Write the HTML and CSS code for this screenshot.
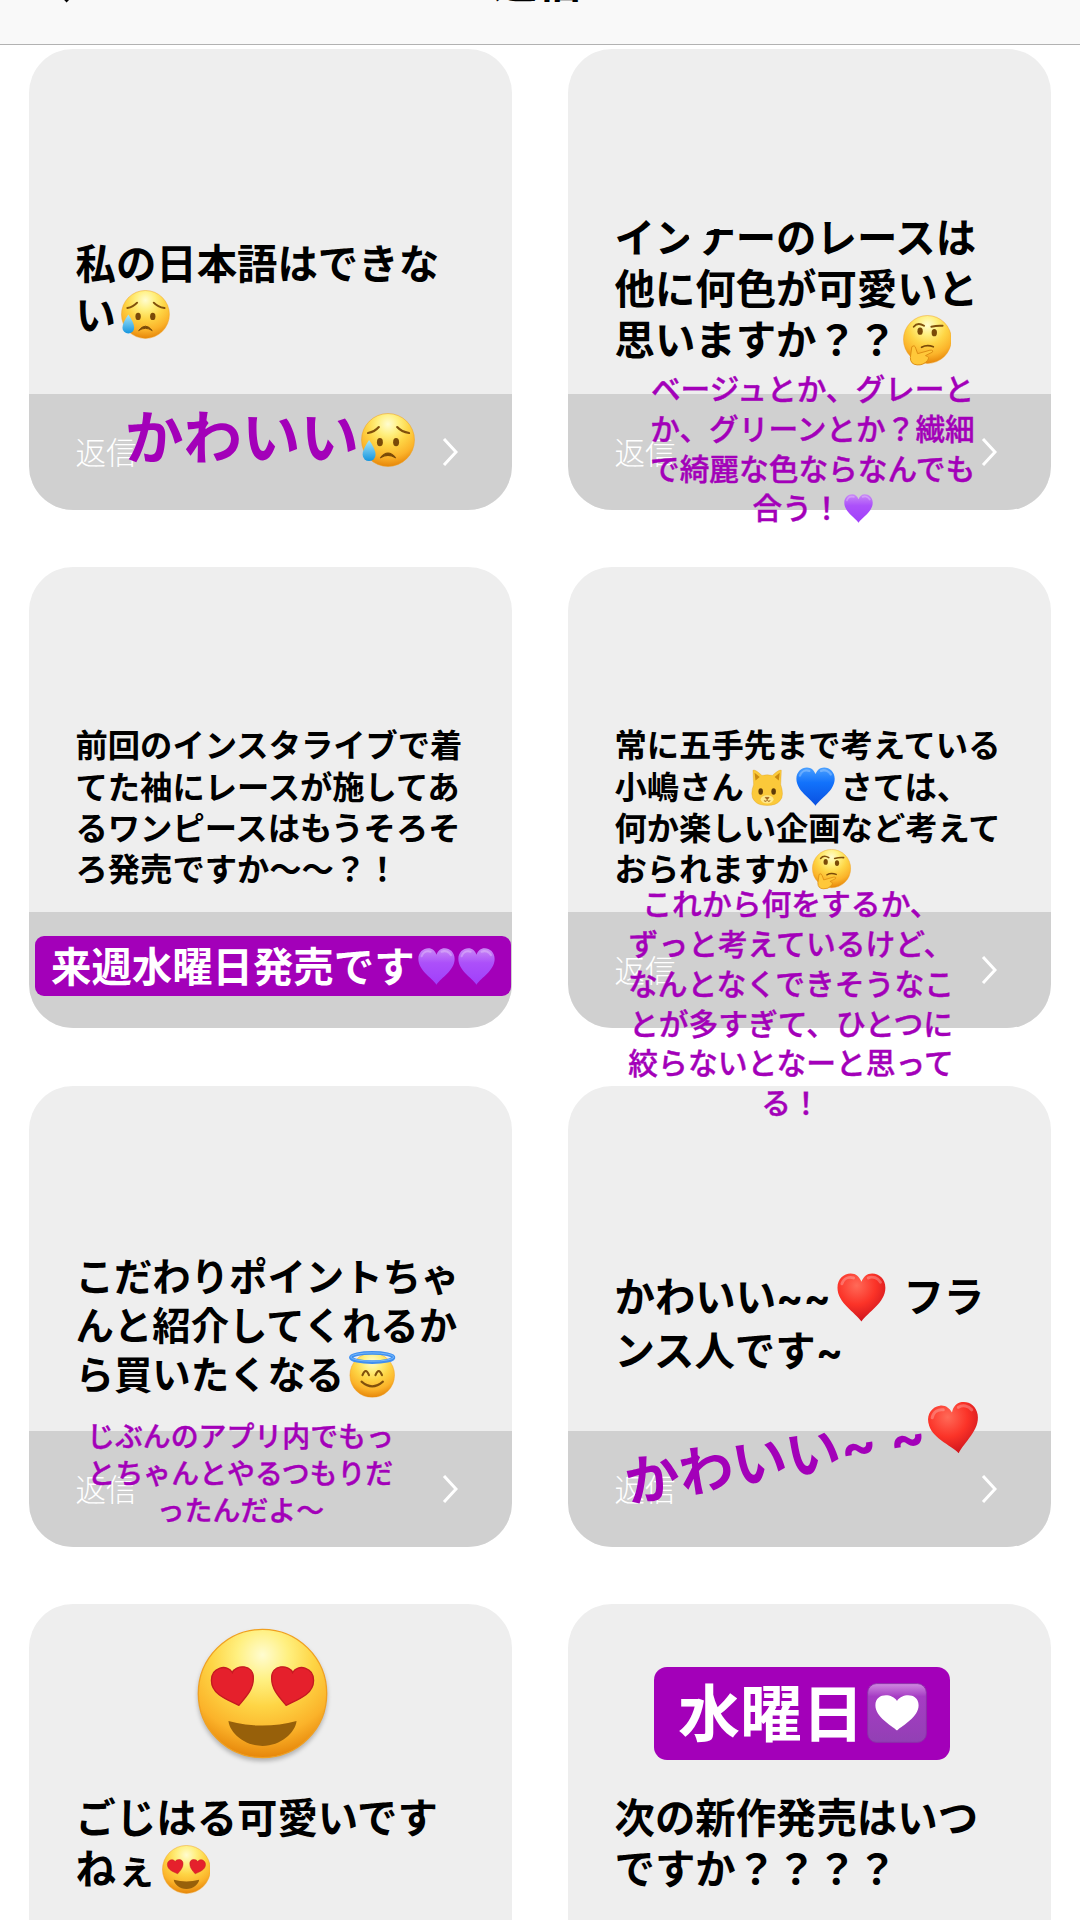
FILE: index.html
```html
<!DOCTYPE html>
<html lang="ja">
<head>
    <meta charset="UTF-8">
    <meta name="viewport" content="width=device-width, initial-scale=1.0">
    <title>返信</title>
    <link rel="stylesheet" href="styles.css">
</head>
<body>
    <!-- Emoji symbols -->
    <svg class="defs" width="0" height="0">
        <defs>
            <radialGradient id="face" cx="50%" cy="20%" r="80%">
                <stop offset="0" stop-color="#fffcd0"/>
                <stop offset="0.25" stop-color="#fff080"/>
                <stop offset="0.5" stop-color="#fed545"/>
                <stop offset="0.78" stop-color="#fbb32a"/>
                <stop offset="1" stop-color="#e6860a"/>
            </radialGradient>
            <linearGradient id="tear" x1="0" y1="0" x2="0" y2="1">
                <stop offset="0" stop-color="#a8e8fb"/>
                <stop offset="1" stop-color="#1595de"/>
            </linearGradient>
            <radialGradient id="red" cx="40%" cy="25%" r="80%">
                <stop offset="0" stop-color="#ff6a58"/>
                <stop offset="0.5" stop-color="#fb3328"/>
                <stop offset="1" stop-color="#c8101c"/>
            </radialGradient>
            <linearGradient id="blue" x1="0" y1="0" x2="0" y2="1">
                <stop offset="0" stop-color="#4aa0ff"/>
                <stop offset="0.4" stop-color="#1272fb"/>
                <stop offset="1" stop-color="#0a50e0"/>
            </linearGradient>
            <linearGradient id="purple" x1="0" y1="0" x2="0" y2="1">
                <stop offset="0" stop-color="#c98af5"/>
                <stop offset="0.4" stop-color="#ac50fa"/>
                <stop offset="1" stop-color="#a03ffa"/>
            </linearGradient>
            <linearGradient id="box" x1="0" y1="0" x2="0" y2="1">
                <stop offset="0" stop-color="#cf8ae0"/>
                <stop offset="0.22" stop-color="#a63cc4"/>
                <stop offset="1" stop-color="#9240b4"/>
            </linearGradient>
        </defs>

        <symbol id="sad" viewBox="0 0 100 100">
            <circle cx="50" cy="50" r="49" fill="url(#face)" stroke="#f0a020"/>
            <path d="M13 37Q25 35 33 26M67 26Q75 35 89 37" fill="none" stroke="#80500c" stroke-width="4" stroke-linecap="round"/>
            <ellipse cx="35" cy="54" rx="5.5" ry="7.5" fill="#7a4a08"/>
            <ellipse cx="65" cy="54" rx="5.5" ry="7.5" fill="#7a4a08"/>
            <path d="M36 83Q50 65 64 83Q50 74 36 83Z" fill="#7a4a08" stroke="#7a4a08" stroke-width="2" stroke-linejoin="round"/>
            <path d="M15 50Q27 67 27 77A12 12 0 0 1 3 77Q3 67 15 50Z" fill="url(#tear)"/>
        </symbol>

        <symbol id="think" viewBox="0 0 100 104">
            <circle cx="50" cy="50" r="49" fill="url(#face)" stroke="#f0a020"/>
            <path d="M22 24Q30 14 43 22M58 24Q70 21 81 22" fill="none" stroke="#80500c" stroke-width="4" stroke-linecap="round"/>
            <ellipse cx="35" cy="33" rx="5.5" ry="7.5" fill="#7a4a08"/>
            <ellipse cx="64" cy="36" rx="5.5" ry="7.5" fill="#7a4a08"/>
            <path d="M38 66Q49 60 62 65" fill="none" stroke="#7a4a08" stroke-width="3.5" stroke-linecap="round"/>
            <path d="M18 65Q24 60 26 68L30 79L55 72Q63 71 60 76L46 83Q56 86 50 93Q42 103 29 102Q15 101 15 87Z" fill="#ffc83a" stroke="#dc8d12" stroke-width="2"/>
        </symbol>

        <symbol id="halo" viewBox="0 0 100 100">
            <circle cx="50" cy="52" r="48" fill="url(#face)" stroke="#f0a020"/>
            <ellipse cx="50" cy="14" rx="46" ry="10" fill="none" stroke="#3f8ff0" stroke-width="8"/>
            <ellipse cx="50" cy="13" rx="46" ry="9" fill="none" stroke="#7cbcfa" stroke-width="2"/>
            <path d="M29 52Q36 34 43 52M57 52Q64 34 71 52" fill="none" stroke="#80500c" stroke-width="4.5" stroke-linecap="round"/>
            <path d="M27 66Q50 86 73 66" fill="none" stroke="#80500c" stroke-width="4.5" stroke-linecap="round"/>
        </symbol>

        <symbol id="love" viewBox="0 0 100 100">
            <circle cx="50" cy="50" r="49" fill="url(#face)" stroke="#f0a020"/>
            <path d="M32 59C24 55 11 51 11 40C11 30 23 27 27 34C29 28 44 27 43 39C43 47 37 53 32 59Z" fill="#e5202c" stroke="#c41a20"/>
            <path d="M68 59C76 55 89 51 89 40C89 30 77 27 73 34C71 28 56 27 57 39C57 47 63 53 68 59Z" fill="#e5202c" stroke="#c41a20"/>
            <path d="M24 71Q50 78 76 71C75 80 64 90 50 90S25 80 24 71Z" fill="#97600a"/>
        </symbol>

        <symbol id="cat" viewBox="0 0 100 116">
            <path d="M6 4Q12 0 34 20Q50 16 66 20Q88 0 94 4L92 48Q104 82 90 98Q78 113 50 113T10 98Q-4 82 8 48Z" fill="#fbc93a" stroke="#d99a20"/>
            <path d="M11 12L27 25L14 36ZM89 12L73 25L86 36Z" fill="#c98a10"/>
            <ellipse cx="30" cy="70" rx="7" ry="10" fill="#5e3a08"/>
            <ellipse cx="70" cy="70" rx="7" ry="10" fill="#5e3a08"/>
            <ellipse cx="50" cy="94" rx="20" ry="13" fill="#ffe88a"/>
            <path d="M44 88H56L50 95ZM40 98Q46 103 50 97Q54 103 60 98" fill="#b06a20" stroke="#8a5010" stroke-width="2"/>
        </symbol>

        <symbol id="heart" viewBox="0 0 100 100">
            <path d="M50 99C37 80 1 61 1 30C1 12 14 1 28 1C39 1 46 8 50 18C54 8 61 1 72 1C86 1 99 12 99 30C99 61 63 80 50 99Z"/>
            <path d="M10 22C14 11 24 7 34 10M64 10C73 6 84 10 89 19" fill="none" stroke="#fff" stroke-opacity="0.25" stroke-width="6" stroke-linecap="round"/>
        </symbol>

        <symbol id="heartbox" viewBox="0 0 100 100">
            <rect x="1" y="1" width="98" height="98" rx="15" fill="url(#box)" stroke="#8a30a8" stroke-width="1.5"/>
            <path d="M50 79C40 70 14 57 14 37C14 17 41 16 50 30C59 16 86 17 86 37C86 57 60 70 50 79Z" fill="#fff"/>
        </symbol>
    </svg>

    <header class="navbar">
        <svg class="back" width="24" height="42" viewBox="0 0 24 42"><path d="M22 2L3 21L22 40"/></svg>
        <h1>返信</h1>
    </header>

    <main class="grid">
        <article class="card">
            <div class="question">
                <p>私の日本語はできな<br>い<svg class="emoji"><use href="#sad"/></svg></p>
            </div>
            <div class="footer"><span>返信</span><svg class="chevron" viewBox="0 0 16 28"><path d="M2 1L14 14L2 27"/></svg></div>
            <div class="answer answer-cute">かわいい<svg class="emoji"><use href="#sad"/></svg></div>
        </article>

        <article class="card">
            <div class="question">
                <p>イン<span class="worn">ナ</span>ーのレースは<br>他に何色が可愛いと<br>思いますか？？<svg class="emoji think"><use href="#think"/></svg></p>
            </div>
            <div class="footer"><span>返信</span><svg class="chevron" viewBox="0 0 16 28"><path d="M2 1L14 14L2 27"/></svg></div>
            <div class="answer answer-colors">ベージュとか、グレーと<br>か、グリーンとか？繊細<br>で綺麗な色ならなんでも<br>合う！<svg class="emoji heart purple"><use href="#heart"/></svg></div>
        </article>

        <article class="card">
            <div class="question small">
                <p>前回のインスタライブで着<br>てた袖にレースが施してあ<br>るワンピースはもうそろそ<br>ろ発売ですか〜〜？！</p>
            </div>
            <div class="footer"></div>
            <div class="banner banner-week"><span>来週水曜日発売です</span><svg class="emoji heart purple"><use href="#heart"/></svg><svg class="emoji heart purple"><use href="#heart"/></svg></div>
        </article>

        <article class="card">
            <div class="question small">
                <p>常に五手先まで考えている<br>小嶋さん<svg class="emoji cat"><use href="#cat"/></svg><svg class="emoji heart blue"><use href="#heart"/></svg>さては、<br>何か楽しい企画など考えて<br>おられますか<svg class="emoji think"><use href="#think"/></svg></p>
            </div>
            <div class="footer"><span>返信</span><svg class="chevron" viewBox="0 0 16 28"><path d="M2 1L14 14L2 27"/></svg></div>
            <div class="answer answer-plans">これから何をするか、<br>ずっと考えているけど、<br>なんとなくできそうなこ<br>とが多すぎて、ひとつに<br>絞らないとなーと思って<br>る！</div>
        </article>

        <article class="card">
            <div class="question medium">
                <p>こだわりポイントちゃ<br>んと紹介してくれるか<br>ら買いたくなる<svg class="emoji"><use href="#halo"/></svg></p>
            </div>
            <div class="footer"><span>返信</span><svg class="chevron" viewBox="0 0 16 28"><path d="M2 1L14 14L2 27"/></svg></div>
            <div class="answer answer-app">じぶんのアプリ内でもっ<br>とちゃんとやるつもりだ<br>ったんだよ〜</div>
        </article>

        <article class="card">
            <div class="question">
                <p>かわいい<span class="tilde">~~</span><svg class="emoji heart red"><use href="#heart"/></svg> フラ<br>ンス人です<span class="tilde">~</span></p>
            </div>
            <div class="footer"><span>返信</span><svg class="chevron" viewBox="0 0 16 28"><path d="M2 1L14 14L2 27"/></svg></div>
            <div class="answer answer-tilted">かわいい<span class="tilde">~ ~</span><svg class="emoji heart red"><use href="#heart"/></svg></div>
        </article>

        <article class="card">
            <div class="question">
                <p>ごじはる可愛いです<br>ねぇ<svg class="emoji"><use href="#love"/></svg></p>
            </div>
            <div class="footer"></div>
            <svg class="sticker"><use href="#love"/></svg>
        </article>

        <article class="card">
            <div class="question">
                <p>次の新作発売はいつ<br>ですか？？？？</p>
            </div>
            <div class="footer"></div>
            <div class="banner banner-day"><span>水曜日</span><svg class="emoji"><use href="#heartbox"/></svg></div>
        </article>
    </main>
</body>
</html>
```

FILE: styles.css
```css
* {
    margin: 0;
    padding: 0;
    box-sizing: border-box;
}

html {
    overflow: hidden;
}

body {
    width: 1080px;
    height: 1920px;
    overflow: hidden;
    background: #fff;
    color: #000;
    font-family: "Noto Sans CJK JP", sans-serif;
}

.defs {
    position: absolute;
}

.navbar {
    position: relative;
    display: flex;
    justify-content: center;
    align-items: flex-end;
    height: 45px;
    padding: 0 5px 38px 0;
    overflow: hidden;
    background: #f9f9f9;
    border-bottom: 1px solid #b2b2b2;
}

.navbar h1 {
    font-size: 44px;
    font-weight: 700;
    line-height: 54px;
}

.back {
    position: absolute;
    left: 46px;
    top: -39px;
    fill: none;
    stroke: #000;
    stroke-width: 4;
}

.grid {
    display: grid;
    grid-template-columns: 483px 483px;
    grid-auto-rows: 461px;
    gap: 57.3px 56px;
    padding: 4px 29px 0;
}

.card {
    position: relative;
    display: flex;
    flex-direction: column;
    border-radius: 44px;
    background: #eee;
}

.question {
    display: flex;
    align-items: center;
    height: 345px;
    padding: 130px 0 0 46.5px;
    font-size: 40.4px;
    font-weight: 700;
    line-height: 51px;
    white-space: nowrap;
}

.question.small {
    padding-top: 132px;
    font-size: 32.3px;
    line-height: 41.3px;
}

.question.medium {
    font-size: 38.4px;
    line-height: 49px;
}

.footer {
    display: flex;
    flex: 1;
    justify-content: space-between;
    align-items: center;
    padding: 0 54px 0 46.5px;
    border-radius: 0 0 44px 44px;
    background: #d0d0d0;
    color: #fff;
    font-size: 30.5px;
    font-weight: 300;
}

.footer span {
    margin-top: -2px;
}

.chevron {
    width: 16px;
    height: 28px;
    fill: none;
    stroke: #fff;
    stroke-width: 3;
}

/* Emoji */
.emoji {
    width: 1.21em;
    height: 1.21em;
    margin: -0.3em 0 -0.3em 0.13em;
    vertical-align: 0.06em;
}

.emoji.think {
    height: 1.26em;
    vertical-align: 0.04em;
}

.emoji.cat {
    width: 1em;
    height: 1.16em;
    margin: -0.3em 0.26em -0.3em 0.24em;
}

.question .blue {
    margin-right: 0.16em;
}

.question .red {
    margin-left: 0.16em;
    margin-right: 0.2em;
}

.red {
    fill: url(#red);
}

.blue {
    fill: url(#blue);
}

.purple {
    fill: url(#purple);
}

.tilde {
    font-family: Inter, sans-serif;
}

.worn {
    position: relative;
}

.worn::after {
    content: "";
    position: absolute;
    left: -19px;
    top: 0;
    width: 60px;
    height: 40px;
    background: #eee;
    clip-path: polygon(0 0, 100% 0, 100% 23px, 38px 23px, 31px 26px, 28px 34px, 14px 36px, 12px 29px, 0 27px);
}

/* Answers laid over the cards */
.answer {
    position: absolute;
    z-index: 1;
    color: #a300b9;
    font-weight: 500;
    text-align: center;
    white-space: nowrap;
    -webkit-text-stroke: 0.4px #a300b9;
}

.answer-cute,
.answer-tilted {
    font-weight: 700;
    -webkit-text-stroke: 0;
}

.answer-cute {
    left: 96px;
    top: 350px;
    font-size: 58.5px;
    line-height: 70px;
}

.answer-cute .emoji {
    width: 54px;
    height: 54px;
    margin-left: 2px;
    vertical-align: 10px;
}

.answer-colors {
    left: 82px;
    top: 319px;
    font-size: 29.7px;
    line-height: 39.8px;
}

.answer-colors .emoji {
    width: 29px;
    height: 29px;
    margin-left: 2px;
    vertical-align: 5px;
}

.answer-plans {
    left: 60px;
    top: 316px;
    font-size: 29.8px;
    line-height: 39.8px;
}

.answer-app {
    left: 58px;
    top: 331px;
    font-size: 27.9px;
    line-height: 37.3px;
}

.answer-tilted {
    left: 55px;
    top: 330px;
    font-size: 54.3px;
    line-height: 70px;
    transform: rotate(-9.3deg);
}

.answer-tilted .emoji {
    width: 51px;
    height: 51px;
    margin-left: 4px;
    vertical-align: 11px;
}

.banner {
    position: absolute;
    display: flex;
    align-items: center;
    background: #a300b9;
    color: #fff;
    font-weight: 700;
    white-space: nowrap;
}

.banner-week {
    left: 6px;
    top: 369px;
    width: 476px;
    height: 60px;
    padding-left: 16px;
    border-radius: 9px;
    font-size: 40.4px;
}

.banner-week span {
    margin-top: -4px;
}

.banner-week .emoji {
    width: 37px;
    height: 37px;
    margin: 0 0 0 3px;
}

.banner-day {
    left: 86px;
    top: 63px;
    width: 296px;
    height: 93px;
    padding-left: 24px;
    border-radius: 13px;
    font-size: 62px;
}

.banner-day span {
    margin-top: -7px;
}

.banner-day .emoji {
    width: 60px;
    height: 60px;
    margin: 0 0 0 3px;
}

.sticker {
    position: absolute;
    left: 168px;
    top: 24px;
    width: 131px;
    height: 131px;
    filter: drop-shadow(0 3px 2px rgba(0, 0, 0, 0.25));
    overflow: visible;
}
```
